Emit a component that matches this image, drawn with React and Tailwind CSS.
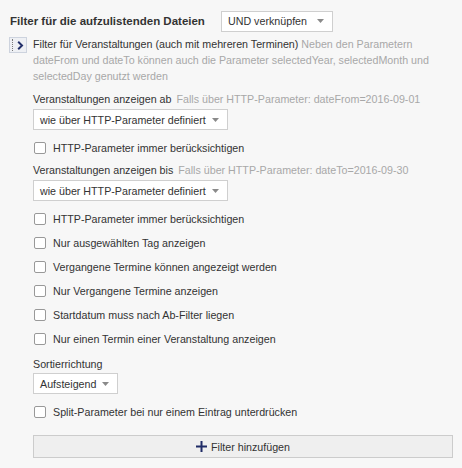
import React from "react";

function Arrow() {
  return (
    <svg width="7" height="4" viewBox="0 0 7 4" className="shrink-0">
      <path d="M0 0 L7 0 L3.5 4 Z" fill="#8a8a8a" />
    </svg>
  );
}

function Select({ label, className = "" }) {
  return (
    <div
      className={`flex items-center h-[21px] bg-white border border-[#cfcfcf] pl-[6px] pr-[8px] gap-[6px] ${className}`}
    >
      <span className="whitespace-nowrap">{label}</span>
      <Arrow />
    </div>
  );
}

function Check({ label }) {
  return (
    <div className="flex items-center h-[24px] pl-[1px]">
      <div className="w-[12px] h-[12px] bg-white border border-[#999999] rounded-[2px] shrink-0" />
      <span className="ml-[7px] whitespace-nowrap">{label}</span>
    </div>
  );
}

export default function App() {
  return (
    <div
      className="w-[462px] h-[468px] bg-[#f7f7f7] text-[#333333] text-[10.7px] leading-[16px] overflow-hidden"
      style={{ fontFamily: '"Liberation Sans", Arial, sans-serif' }}
    >
      <div className="flex items-center pt-[10px] pl-[10px] h-[32px]">
        <span className="font-bold text-[11.5px] whitespace-nowrap">
          Filter für die aufzulistenden Dateien
        </span>
        <Select label="UND verknüpfen" className="ml-auto mr-[129px] w-[112px] justify-between" />
      </div>

      <div className="flex mt-[4px] pl-[9px]">
        <div className="relative w-[18px] h-[16px] mt-[1px] border border-[#cdd3de] bg-[#eef0f4] shrink-0">
          <div className="absolute left-[2px] top-[1px] bottom-[1px] border-l border-dotted border-[#7a7a7a]" />
          <svg width="7" height="9" viewBox="0 0 7 9" className="absolute left-[7px] top-[3px]">
            <path d="M1.2 0.8 L5 4.5 L1.2 8.2" fill="none" stroke="#23306a" strokeWidth="2" />
          </svg>
        </div>
        <div className="ml-[6px] pr-[24px]">
          <span>Filter für Veranstaltungen (auch mit mehreren Terminen)</span>{" "}
          <span className="text-[#a8a8a8]">
            Neben den Parametern dateFrom und dateTo können auch die Parameter selectedYear, selectedMonth und
            selectedDay genutzt werden
          </span>
        </div>
      </div>

      <div className="pl-[33px] pr-[9px]">
        <div className="mt-[7px] h-[16px] whitespace-nowrap">
          Veranstaltungen anzeigen ab{" "}
          <span className="text-[#a8a8a8] ml-[2px]">Falls über HTTP-Parameter: dateFrom=2016-09-01</span>
        </div>
        <div className="flex mt-[2px]">
          <Select label="wie über HTTP-Parameter definiert" />
        </div>
        <div className="mt-[6px]">
          <Check label="HTTP-Parameter immer berücksichtigen" />
        </div>
        <div className="mt-[2px] h-[16px] whitespace-nowrap">
          Veranstaltungen anzeigen bis{" "}
          <span className="text-[#a8a8a8] ml-[2px]">Falls über HTTP-Parameter: dateTo=2016-09-30</span>
        </div>
        <div className="flex mt-[2px]">
          <Select label="wie über HTTP-Parameter definiert" />
        </div>
        <div className="mt-[6px] flex flex-col">
          <Check label="HTTP-Parameter immer berücksichtigen" />
          <Check label="Nur ausgewählten Tag anzeigen" />
          <Check label="Vergangene Termine können angezeigt werden" />
          <Check label="Nur Vergangene Termine anzeigen" />
          <Check label="Startdatum muss nach Ab-Filter liegen" />
          <Check label="Nur einen Termin einer Veranstaltung anzeigen" />
        </div>
        <div className="mt-[5px] h-[16px]">Sortierrichtung</div>
        <div className="flex mt-[1px]">
          <Select label="Aufsteigend" />
        </div>
        <div className="mt-[6px]">
          <Check label="Split-Parameter bei nur einem Eintrag unterdrücken" />
        </div>
        <div className="mt-[11px] h-[23px] w-[420px] bg-[#efefef] border border-[#cccccc] flex items-center justify-center gap-[4px]">
          <svg width="11" height="11" viewBox="0 0 11 11">
            <path d="M5.5 0 V11 M0 5.5 H11" stroke="#1f2b66" strokeWidth="2" />
          </svg>
          <span>Filter hinzufügen</span>
        </div>
      </div>
    </div>
  );
}
